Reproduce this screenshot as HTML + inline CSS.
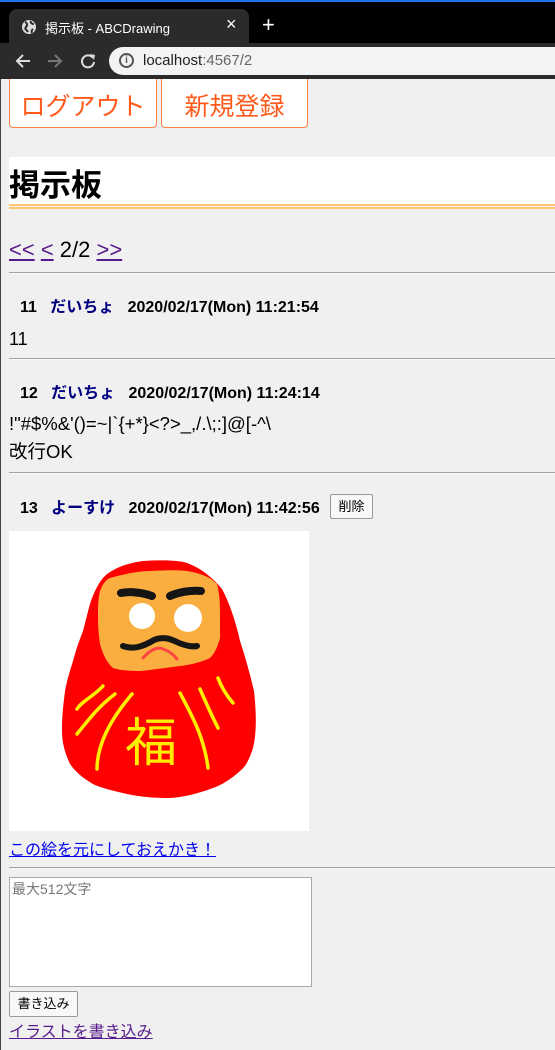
<!DOCTYPE html>
<html><head><meta charset="utf-8"><style>
*{margin:0;padding:0;box-sizing:border-box}
body{width:555px;height:1050px;overflow:hidden;background:#f0f0f0;font-family:"Liberation Sans","Noto Sans CJK JP",sans-serif;position:relative}
.a{position:absolute;white-space:nowrap}
.c{z-index:5}
.hr{position:absolute;left:9px;right:0;height:2px;border-top:1px solid #a0a0a0;border-bottom:1px solid #f8f8f8}
.hd{font-weight:bold;font-size:16px;color:#000}
.hd .n{color:#000080}
a{color:#551a8b}
</style></head><body>
<!-- chrome -->
<div class="a c" style="left:0;top:0;width:555px;height:2px;background:#1a73e8"></div>
<div class="a c" style="left:0;top:2px;width:555px;height:41px;background:#000"></div>
<div class="a c" style="left:9px;top:9px;width:240px;height:36px;background:#2b2b2b;border-radius:8px 8px 0 0"></div>
<div class="a c" style="left:0;top:43px;width:555px;height:36px;background:#2b2b2b"></div>
<svg class="a c" style="left:21px;top:19px" width="16" height="16" viewBox="0 0 16 16"><circle cx="8" cy="8" r="7" fill="#ddd"/><path d="M4 3c2 1 3 3 1 5s1 3 2 5M10 2c-1 2 1 3 3 3M12 10c-1 1-2 2-1 4" stroke="#2b2b2b" stroke-width="2" fill="none"/></svg>
<div class="a c" style="left:45px;top:18px;font-size:13px;color:#fff">掲示板 - ABCDrawing</div>
<div class="a c" style="left:226px;top:14px;font-size:18px;color:#fff">×</div>
<div class="a c" style="left:262px;top:12px;font-size:22px;color:#fff">+</div>
<svg class="a c" style="left:12px;top:50px" width="90" height="22" viewBox="0 0 90 22"><path d="M18 11H5M11 5l-6 6 6 6" stroke="#ddd" stroke-width="2" fill="none"/><path d="M36 11h13M43 5l6 6-6 6" stroke="#777" stroke-width="2" fill="none"/><path d="M81 8a6 6 0 1 0 1 4" stroke="#ddd" stroke-width="2" fill="none"/><path d="M78 4l5 1-1 5z" fill="#ddd"/></svg>
<div class="a c" style="left:109px;top:47px;width:460px;height:28px;background:#f1f3f4;border-radius:14px"></div>
<div class="a c" style="left:119px;top:53px;width:15px;height:15px;border:2px solid #555;border-radius:50%;font-size:10px;font-weight:bold;color:#555;text-align:center;line-height:11px">i</div>
<div class="a c" style="left:143px;top:52px;font-size:15px;color:#222">localhost<span style="color:#666">:4567/2</span></div>
<div class="a" style="left:0;top:79px;width:1px;height:971px;background:#444"></div>
<!-- page -->
<div class="a" style="left:9px;top:66px;width:148px;height:62px;background:#fff;border:1px solid #ff8040;border-radius:4px;color:#ff5a1a;font-size:25px;text-align:center;padding-top:20px">ログアウト</div>
<div class="a" style="left:161px;top:66px;width:147px;height:62px;background:#fff;border:1px solid #ff8040;border-radius:4px;color:#ff5a1a;font-size:25px;text-align:center;padding-top:20px">新規登録</div>
<div class="a" style="left:9px;top:157px;width:546px;height:47px;background:#fff"></div>
<div class="a" style="left:9px;top:160px;font-size:31px;font-weight:bold">掲示板</div>
<div class="a" style="left:9px;top:204px;width:546px;height:2px;background:#ffc870"></div>
<div class="a" style="left:9px;top:207px;width:546px;height:2px;background:#ffc870"></div>
<div class="a" style="left:9px;top:237px;font-size:22px"><a href="#">&lt;&lt;</a> <a href="#">&lt;</a> 2/2 <a href="#">&gt;&gt;</a></div>
<div class="hr" style="top:272px"></div>
<div class="a hd" style="left:20px;top:293px">11&nbsp;&nbsp; <span class="n">だいちょ</span>&nbsp;&nbsp; 2020/02/17(Mon) 11:21:54</div>
<div class="a" style="left:9px;top:329px;font-size:18px">11</div>
<div class="hr" style="top:358px"></div>
<div class="a hd" style="left:20px;top:379px">12&nbsp;&nbsp; <span class="n">だいちょ</span>&nbsp;&nbsp; 2020/02/17(Mon) 11:24:14</div>
<div class="a" style="left:9px;top:410px;font-size:18.5px;line-height:28px">!"#$%&amp;'()=~|`{+*}&lt;?&gt;_,/.\;:]@[-^\<br>改行OK</div>
<div class="hr" style="top:472px"></div>
<div class="a hd" style="left:20px;top:494px">13&nbsp;&nbsp; <span class="n">よーすけ</span>&nbsp;&nbsp; 2020/02/17(Mon) 11:42:56</div>
<div class="a" style="left:330px;top:494px;width:43px;height:25px;background:#f8f8f8;border:1px solid #999;border-radius:2px;font-size:13px;text-align:center;line-height:23px">削除</div>
<svg class="a" style="left:9px;top:531px" width="300" height="300" viewBox="0 0 300 300">
<rect width="300" height="300" fill="#fff"/>
<path d="M134 30C150 29 170 29 178 32C192 37 204 47 213 58C221 73 227 92 231 110C236 125 241 143 245 160C248 187 247 205 244 217C240 230 236 236 231 240C220 250 210 255 204 257C185 264 170 267 158 267C140 267 128 265 118 263C100 259 90 256 84 253C72 246 66 240 61 233C55 220 53 210 53 200C53 180 55 170 56 160C59 145 62 137 64 130C68 115 71 108 74 100C78 85 80 75 83 67C88 55 92 48 98 43C110 35 120 32 134 30Z" fill="#f00"/>
<path d="M101 47C115 43 130 40 141 40C160 39 170 39 178 40C195 43 202 47 208 53C211 65 211 75 211 83C211 95 211 100 211 107C208 118 205 123 201 127C190 132 180 134 171 135C155 137 142 139 131 140C120 140 110 139 104 137C96 130 93 120 91 113C89 100 89 90 89 80C89 70 90 65 91 60C94 52 97 49 101 47Z" fill="#f9ae3f"/>
<path d="M112 62C122 60 135 62 143 65M161 65C170 61 182 59 192 60" stroke="#151515" stroke-width="8" stroke-linecap="round" fill="none"/>
<circle cx="133" cy="85" r="13" fill="#fff"/><circle cx="179" cy="87" r="14" fill="#fff"/>
<path d="M114 115C125 119 135 115 145 109C155 105 162 108 170 112C178 115 183 116 188 115" stroke="#151515" stroke-width="6" stroke-linecap="round" fill="none"/>
<path d="M134 127C140 120 148 115 154 118C160 120 165 124 168 128" stroke="#f44" stroke-width="3" stroke-linecap="round" fill="none"/>
<g stroke="#ffee00" stroke-width="3.5" stroke-linecap="round" fill="none">
<path d="M68 178C73 170 85 165 94 155"/><path d="M68 203C80 188 90 175 106 163"/><path d="M88 238C88 215 100 190 123 163"/><path d="M171 162C182 183 195 205 199 237"/><path d="M191 158C197 172 203 185 209 197"/><path d="M209 147C213 158 218 165 224 172"/></g>
<text x="116" y="230" font-size="52" fill="#ffee00" font-family="Noto Sans CJK JP,sans-serif">福</text>
</svg>
<div class="a" style="left:9px;top:836px;font-size:16px"><a href="#" style="color:#0000ee">この絵を元にしておえかき！</a></div>
<div class="hr" style="top:867px"></div>
<div class="a" style="left:9px;top:877px;width:303px;height:110px;background:#fff;border:1px solid #a9a9a9;font-size:14px;color:#777;padding:1px 2px">最大512文字</div>
<div class="a" style="left:9px;top:991px;width:69px;height:26px;background:#f8f8f8;border:1px solid #999;border-radius:2px;font-size:13px;text-align:center;line-height:24px">書き込み</div>
<div class="a" style="left:9px;top:1018px;font-size:16px"><a href="#">イラストを書き込み</a></div>
</body></html>
